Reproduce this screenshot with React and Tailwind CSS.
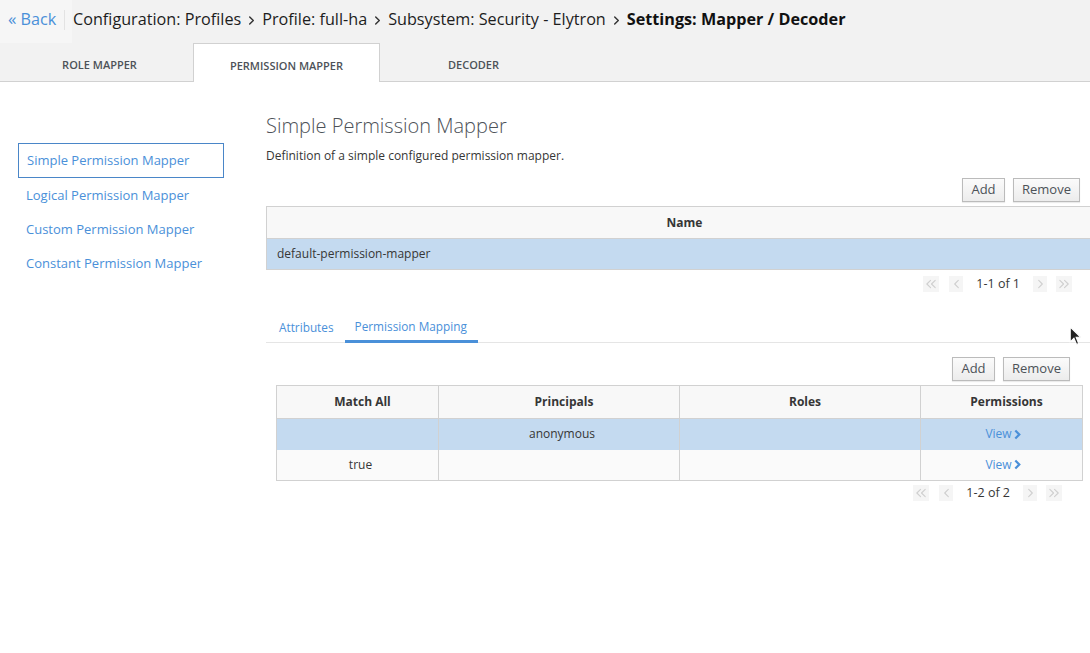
import React from 'react';

const font = { fontFamily: '"Open Sans", "Liberation Sans", sans-serif' };

const Chevron = ({ className = '', dir = 'right', double = false, strokeWidth = 1.2 }) => {
  const single = dir === 'right' ? '3,2 7,6 3,10' : '7,2 3,6 7,10';
  const first = dir === 'right' ? '2,2 6,6 2,10' : '6,2 2,6 6,10';
  const second = dir === 'right' ? '7,2 11,6 7,10' : '11,2 7,6 11,10';
  return (
    <svg viewBox={double ? '0 0 14 12' : '0 0 10 12'} className={className} fill="none" stroke="currentColor" strokeWidth={strokeWidth} strokeLinecap="round" strokeLinejoin="round">
      <polyline points={double ? first : single} />
      {double && <polyline points={second} />}
    </svg>
  );
};

const Crumb = ({ children, last }) => (
  <>
    <span className={last ? 'font-bold text-[#111]' : 'text-[#1d1d1d]'}>{children}</span>
    {!last && <Chevron className="w-[9px] h-[11px] mx-[6px] text-[#333] mt-[2px]" strokeWidth={1.6} />}
  </>
);

const Btn = ({ children, className = '' }) => (
  <button className={`h-[24px] border border-[#bbbbbb] bg-gradient-to-b from-[#fbfbfb] to-[#ececec] text-[13px] text-[#4d5258] shadow-[0_1px_1px_rgba(0,0,0,0.08)] ${className}`}>
    {children}
  </button>
);

const Pager = ({ label }) => (
  <div className="flex items-center h-[16px] text-[12.5px] text-[#363636]">
    <span className="w-[16px] h-[16px] bg-[#f5f5f5] flex items-center justify-center text-[#cfcfcf]">
      <Chevron double dir="left" className="w-[13px] h-[12px]" />
    </span>
    <span className="w-[14px] h-[16px] bg-[#f5f5f5] ml-[10px] flex items-center justify-center text-[#cfcfcf]">
      <Chevron dir="left" className="w-[9px] h-[12px]" />
    </span>
    <span className="ml-[13px] mr-[13px]">{label}</span>
    <span className="w-[14px] h-[16px] bg-[#f5f5f5] flex items-center justify-center text-[#cfcfcf]">
      <Chevron className="w-[9px] h-[12px]" />
    </span>
    <span className="w-[16px] h-[16px] bg-[#f5f5f5] ml-[9px] flex items-center justify-center text-[#cfcfcf]">
      <Chevron double className="w-[13px] h-[12px]" />
    </span>
  </div>
);

const ViewLink = () => (
  <span className="inline-flex items-center text-[#4a90d9]">
    View
    <svg viewBox="0 0 8 12" className="w-[7px] h-[11px] ml-[2px]" fill="none" stroke="currentColor" strokeWidth="2.6" strokeLinejoin="miter">
      <polyline points="1.5,1.5 6,6 1.5,10.5" />
    </svg>
  </span>
);

const navItems = [
  'Simple Permission Mapper',
  'Logical Permission Mapper',
  'Custom Permission Mapper',
  'Constant Permission Mapper',
];

const mappings = [
  { matchAll: '', principals: 'anonymous', roles: '', selected: true },
  { matchAll: 'true', principals: '', roles: '', selected: false },
];

export default function App() {
  return (
    <div className="w-[1090px] h-[653px] bg-white overflow-hidden relative" style={font}>
      {/* header */}
      <div className="bg-[#f2f2f2] border-b border-[#d1d1d1] h-[82px]">
        <div className="h-[43px] flex items-stretch text-[16.2px]">
          <div className="bg-[#f6f6f6] w-[72px] flex items-center pl-[8px] pb-[4px]">
            <span className="text-[#4a90d9] flex items-center">
              <span className="text-[17px] mr-[4px] -mt-[2px]">«</span>Back
            </span>
            <span className="ml-[8px] w-px h-[20px] bg-[#e3e3e3]" />
          </div>
          <div className="flex items-center pl-[1px] pb-[4px]">
            <Crumb>Configuration: Profiles</Crumb>
            <Crumb>Profile: full-ha</Crumb>
            <Crumb>Subsystem: Security - Elytron</Crumb>
            <Crumb last>Settings: Mapper / Decoder</Crumb>
          </div>
        </div>
        <div className="flex pl-[6px] h-[39px] text-[11px] font-semibold text-[#4d5258] uppercase">
          <div className="w-[187px] flex items-center justify-center pt-[6px]">Role Mapper</div>
          <div className="w-[187px] flex items-center justify-center pt-[6px] bg-white border border-b-0 border-[#d1d1d1] h-[39px] -mb-px">
            Permission Mapper
          </div>
          <div className="w-[187px] flex items-center justify-center pt-[6px]">Decoder</div>
        </div>
      </div>

      <div className="flex">
        {/* left nav */}
        <div className="w-[266px] shrink-0 pl-[18px] pt-[61px]">
          <div className="w-[206px] text-[13px] text-[#4a90d9]">
            {navItems.map((item, i) => (
              <div
                key={item}
                className={
                  i === 0
                    ? 'h-[35px] border border-[#4a86c8] flex items-center pl-[8px]'
                    : 'h-[34px] flex items-center pl-[8px] pt-[2px]'
                }
              >
                {item}
              </div>
            ))}
          </div>
        </div>

        {/* main */}
        <div className="flex-1 min-w-0 text-[12px] text-[#363636]">
          <h1 className="mt-[30px] text-[20px] leading-[28px] font-light text-[#4d5258]">Simple Permission Mapper</h1>
          <p className="mt-[8px] leading-[16px]">Definition of a simple configured permission mapper.</p>

          <div className="mt-[14px] flex justify-end gap-[8px] pr-[10px]">
            <Btn className="w-[43px]">Add</Btn>
            <Btn className="w-[67px]">Remove</Btn>
          </div>

          <div className="mt-[4px] border-y border-l border-[#d1d1d1]">
            <div className="h-[32px] bg-[#f8f8f8] border-b border-[#d1d1d1] flex items-center justify-center font-bold text-[#363636] pl-[12px]">
              Name
            </div>
            <div className="h-[30px] bg-[#c4daf0] flex items-center pl-[10px]">default-permission-mapper</div>
          </div>

          <div className="mt-[6px] flex justify-end pr-[18px]">
            <Pager label="1-1 of 1" />
          </div>

          {/* sub tabs */}
          <div className="mt-[20px] h-[31px] flex items-stretch border-b border-[#e5e5e5] text-[11.8px] text-[#4a90d9]">
            <div className="pl-[13px] pr-[11px] flex items-center pt-[2px]">Attributes</div>
            <div className="pl-[10px] pr-[11px] flex items-center pt-[2px] border-b-[3px] border-[#4a90d9] -mb-px">Permission Mapping</div>
          </div>

          <div className="pl-[10px] pr-[8px]">
            <div className="mt-[14px] flex justify-end gap-[8px] pr-[12px]">
              <Btn className="w-[43px]">Add</Btn>
              <Btn className="w-[67px]">Remove</Btn>
            </div>

            <table className="mt-[4px] w-full border-collapse border border-[#d1d1d1] table-fixed">
              <colgroup>
                <col className="w-[162px]" />
                <col className="w-[241px]" />
                <col className="w-[241px]" />
                <col className="w-[162px]" />
              </colgroup>
              <thead>
                <tr className="h-[33px] bg-[#f8f8f8]">
                  {['Match All', 'Principals', 'Roles', 'Permissions'].map(h => (
                    <th key={h} className="border border-[#d1d1d1] font-bold text-[#363636] pl-[10px]">{h}</th>
                  ))}
                </tr>
              </thead>
              <tbody>
                {mappings.map((m, i) => (
                  <tr key={i} className={m.selected ? 'h-[31px] bg-[#c4daf0]' : 'h-[31px] bg-[#fafafa]'}>
                    <td className={m.selected ? 'text-center pl-[6px]' : 'text-center pl-[6px] border-r border-[#d1d1d1]'}>{m.matchAll}</td>
                    <td className="text-center pl-[6px] border-x border-[#d1d1d1]">{m.principals}</td>
                    <td className="text-center pl-[6px] border-x border-[#d1d1d1]">{m.roles}</td>
                    <td className="text-center pl-[3px] border-l border-[#d1d1d1]"><ViewLink /></td>
                  </tr>
                ))}
              </tbody>
            </table>

            <div className="mt-[4px] flex justify-end pr-[20px]">
              <Pager label="1-2 of 2" />
            </div>
          </div>
        </div>
      </div>

      {/* mouse cursor */}
      <svg viewBox="0 0 12 20" className="absolute left-[1069px] top-[326px] w-[13px] h-[21px]">
        <path d="M1 1 L1 15 L4.5 11.5 L7 17.5 L9 16.6 L6.6 10.8 L11 10.8 Z" fill="#222" stroke="#fff" strokeWidth="1" />
      </svg>
    </div>
  );
}
